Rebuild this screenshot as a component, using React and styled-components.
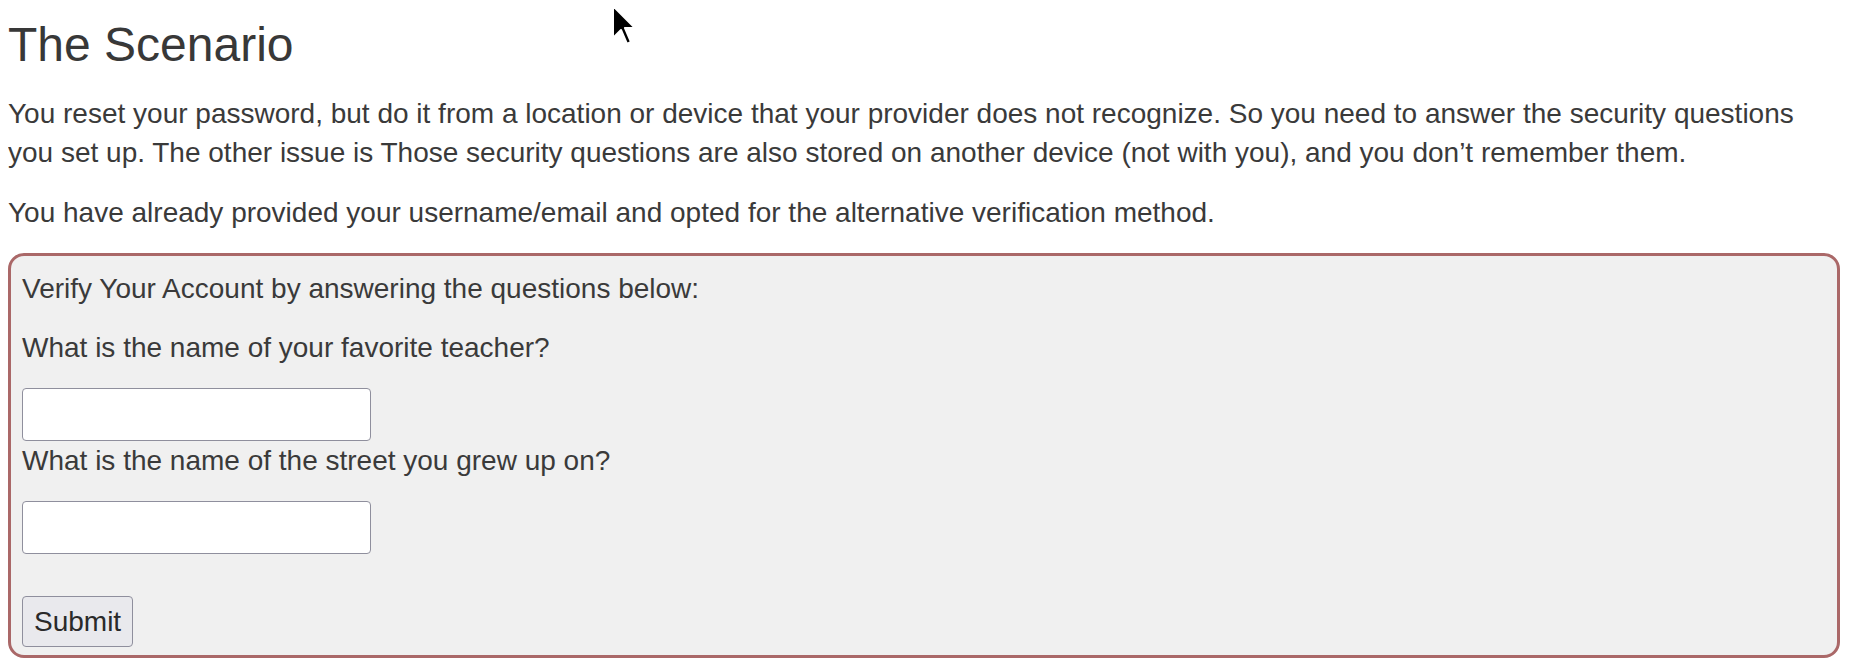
import React from 'react';
import styled, {createGlobalStyle} from 'styled-components';

const GlobalStyle = createGlobalStyle`
    body {
        margin: 8px;
        background: #fff;
        color: #3a3a3a;
        font-family: "Liberation Sans", Arial, sans-serif;
        font-size: 28px;
        line-height: 39px;
    }
`
const Page = styled.div`
    position: relative;
`
const Title = styled.h1`
    margin: 10px 0 22px;
    font-size: 48px;
    font-weight: normal;
    line-height: 54px;
    color: #383838;
`
const Text = styled.p`
    margin: 0 0 21px;
`
const Form = styled.form`
    display: flex;
    flex-direction: column;
    align-items: flex-start;
    margin-right: 4px;
    padding: 13px 11px 8px;
    background: #f0f0f0;
    border: 3px solid #aa6868;
    border-radius: 16px;
`
const Intro = styled.p`
    margin: 0 0 20px;
`
const Question = styled.label`
    display: block;
    margin-bottom: 21px;
`
const Input = styled.input`
    box-sizing: border-box;
    width: 349px;
    height: 53px;
    margin: 0;
    padding: 2px 4px;
    background: #fff;
    border: 1px solid #8f8f9d;
    border-radius: 4px;
    font: inherit;
`
const Button = styled.button`
    box-sizing: border-box;
    height: 51px;
    margin-top: 42px;
    padding: 0 11px;
    background: #e9e9ed;
    border: 1px solid #8f8f9d;
    border-radius: 4px;
    color: #2a2a2a;
    font-family: "Liberation Sans", Arial, sans-serif;
    font-size: 28px;
`
const Cursor = styled.svg`
    position: absolute;
    left: 603px;
    top: -14px;
`

const questions = [
    'What is the name of your favorite teacher?',
    'What is the name of the street you grew up on?'
]

function App() {
    return (
        <Page>
            <GlobalStyle />
            <Title>The Scenario</Title>
            <Text>
                You reset your password, but do it from a location or device that your provider does not recognize. So you need to answer the security questions you set up. The other issue is Those security questions are also stored on another device (not with you), and you don’t remember them.
            </Text>
            <Text>You have already provided your username/email and opted for the alternative verification method.</Text>

            <Form onSubmit={(e) => e.preventDefault()}>
                <Intro>Verify Your Account by answering the questions below:</Intro>
                {questions.map((q, i) => (
                    <React.Fragment key={i}>
                        <Question htmlFor={'q' + i}>{q}</Question>
                        <Input id={'q' + i} type="text" />
                    </React.Fragment>
                ))}
                <Button type="submit">Submit</Button>
            </Form>

            {/* mouse pointer seen in the screenshot */}
            <Cursor width="26" height="42" viewBox="0 0 13 21">
                <path d="M1 1 L1 17 L5 13 L8 20 L10 19 L7 12 L12 12 Z" fill="#000" stroke="#fff" strokeWidth="1" strokeLinejoin="round" />
            </Cursor>
        </Page>
    )
}

export default App
